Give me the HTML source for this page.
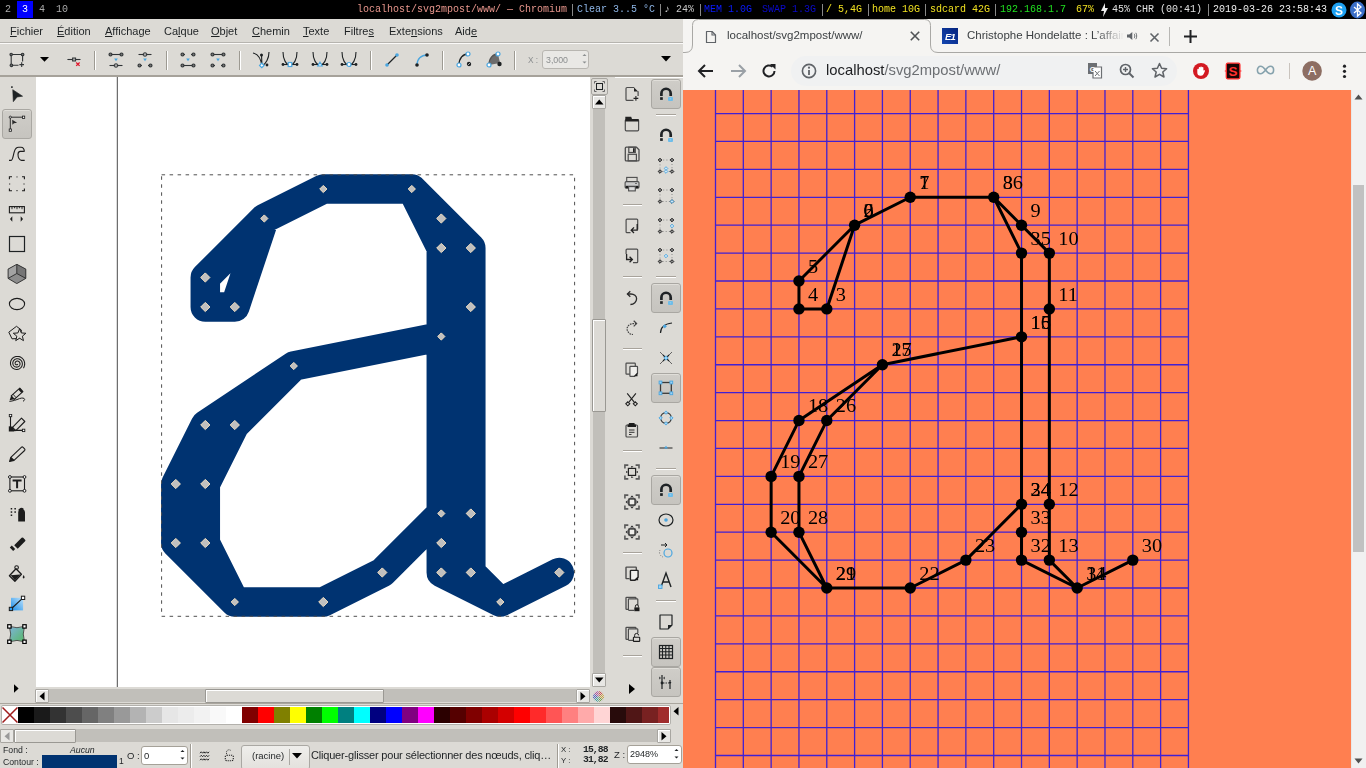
<!DOCTYPE html>
<html><head><meta charset="utf-8">
<style>
*{margin:0;padding:0;box-sizing:border-box}
html,body{width:1366px;height:768px;overflow:hidden;background:#000;font-family:"Liberation Sans",sans-serif;position:relative}
.a{position:absolute}
.t{white-space:pre;line-height:1.15;will-change:transform}
#bar{left:0;top:0;width:1366px;height:19px;background:#000;font-family:"Liberation Mono",monospace;font-size:10px}
#bar .t{line-height:19px}
#ink{left:0;top:0;width:683px;height:768px;overflow:hidden}
</style></head><body>
<div class="a" style="left:0;top:19px;width:683px;height:749px;background:#dcdad5"></div>
<div id="ink" class="a"><div class="a t" style="left:10px;top:26.19px;font-family:'Liberation Sans',sans-serif;font-size:11px;line-height:1;color:#1e2224;"><u>F</u>ichier</div><div class="a t" style="left:57px;top:26.19px;font-family:'Liberation Sans',sans-serif;font-size:11px;line-height:1;color:#1e2224;"><u>É</u>dition</div><div class="a t" style="left:105px;top:26.19px;font-family:'Liberation Sans',sans-serif;font-size:11px;line-height:1;color:#1e2224;"><u>A</u>ffichage</div><div class="a t" style="left:164px;top:26.19px;font-family:'Liberation Sans',sans-serif;font-size:11px;line-height:1;color:#1e2224;">Ca<u>l</u>que</div><div class="a t" style="left:211px;top:26.19px;font-family:'Liberation Sans',sans-serif;font-size:11px;line-height:1;color:#1e2224;"><u>O</u>bjet</div><div class="a t" style="left:252px;top:26.19px;font-family:'Liberation Sans',sans-serif;font-size:11px;line-height:1;color:#1e2224;"><u>C</u>hemin</div><div class="a t" style="left:303px;top:26.19px;font-family:'Liberation Sans',sans-serif;font-size:11px;line-height:1;color:#1e2224;"><u>T</u>exte</div><div class="a t" style="left:344px;top:26.19px;font-family:'Liberation Sans',sans-serif;font-size:11px;line-height:1;color:#1e2224;">Filtre<u>s</u></div><div class="a t" style="left:389px;top:26.19px;font-family:'Liberation Sans',sans-serif;font-size:11px;line-height:1;color:#1e2224;">Exte<u>n</u>sions</div><div class="a t" style="left:455px;top:26.19px;font-family:'Liberation Sans',sans-serif;font-size:11px;line-height:1;color:#1e2224;">Aid<u>e</u></div><div class="a" style="left:0px;top:42px;width:683px;height:1px;background:#b6b4af"></div><div class="a" style="left:0px;top:43px;width:683px;height:1px;background:#fbfaf9"></div><div class="a" style="left:0px;top:75px;width:683px;height:2px;background:#a6a29a"></div><div class="a" style="left:615px;top:77px;width:68px;height:1px;background:#fff"></div><div class="a" style="left:94px;top:51px;width:1px;height:19px;background:#9d9a92"></div><div class="a" style="left:95px;top:51px;width:1px;height:19px;background:#ffffff"></div><div class="a" style="left:166px;top:51px;width:1px;height:19px;background:#9d9a92"></div><div class="a" style="left:167px;top:51px;width:1px;height:19px;background:#ffffff"></div><div class="a" style="left:239px;top:51px;width:1px;height:19px;background:#9d9a92"></div><div class="a" style="left:240px;top:51px;width:1px;height:19px;background:#ffffff"></div><div class="a" style="left:370px;top:51px;width:1px;height:19px;background:#9d9a92"></div><div class="a" style="left:371px;top:51px;width:1px;height:19px;background:#ffffff"></div><div class="a" style="left:442px;top:51px;width:1px;height:19px;background:#9d9a92"></div><div class="a" style="left:443px;top:51px;width:1px;height:19px;background:#ffffff"></div><div class="a" style="left:514px;top:51px;width:1px;height:19px;background:#9d9a92"></div><div class="a" style="left:515px;top:51px;width:1px;height:19px;background:#ffffff"></div><svg class="a" style="left:9px;top:52px" width="16" height="16" viewBox="0 0 16 16" ><path d="M2.2 2.5H13.6V9.5M2.2 2.5V13.3H9.5" stroke="#303436" stroke-width="1.1" fill="none"/><circle cx="2.2" cy="2.5" r="1.2" fill="#777" stroke="#303436" stroke-width="1.1"/><circle cx="13.6" cy="2.5" r="1.3" fill="#777" stroke="#303436" stroke-width="1.1"/><circle cx="2.4" cy="13.3" r="1.3" fill="#777" stroke="#303436" stroke-width="1.1"/><path d="M12.7 10.3V14.9M10.4 12.6H15" stroke="#303436" stroke-width="1.1"/></svg><svg class="a" style="left:40px;top:57px" width="9" height="5" viewBox="0 0 9 5" ><path d="M0 0H9L4.5 4.8Z" fill="#000"/></svg><svg class="a" style="left:66px;top:55px" width="16" height="12" viewBox="0 0 16 12" ><path d="M1.4 4.5H14.5" stroke="#303436" stroke-width="1.1"/><rect x="6.6" y="3" width="3" height="3" fill="#aaa" stroke="#303436" stroke-width="1"/><path d="M10.2 7.5L13.6 10.9M13.6 7.5L10.2 10.9" stroke="#e0192d" stroke-width="1.3"/></svg><svg class="a" style="left:108px;top:52px" width="16" height="16" viewBox="0 0 16 16" ><path d="M2.5 2.5H13.5" stroke="#303436" stroke-width="1.1"/><circle cx="2.5" cy="2.5" r="1.5" fill="#777" stroke="#303436" stroke-width="1.1"/><circle cx="13.5" cy="2.5" r="1.5" fill="#777" stroke="#303436" stroke-width="1.1"/><path d="M6.2 6.6H9.8L8 9.2Z" fill="#4aa6e0"/><path d="M1.5 13.5H14.5" stroke="#303436" stroke-width="1.1"/><rect x="6.4" y="11.9" width="3.2" height="3.2" rx="0.6" fill="#aaa" stroke="#303436" stroke-width="1"/></svg><svg class="a" style="left:137px;top:52px" width="16" height="16" viewBox="0 0 16 16" ><path d="M1.5 2.5H14.5" stroke="#303436" stroke-width="1.1"/><rect x="6.4" y="0.8999999999999999" width="3.2" height="3.2" rx="0.6" fill="#aaa" stroke="#303436" stroke-width="1"/><path d="M6.2 6.6H9.8L8 9.2Z" fill="#4aa6e0"/><path d="M2.5 13.5H5M11 13.5H13.5" stroke="#303436" stroke-width="1.1"/><circle cx="2.5" cy="13.5" r="1.5" fill="#777" stroke="#303436" stroke-width="1.1"/><circle cx="13.5" cy="13.5" r="1.5" fill="#777" stroke="#303436" stroke-width="1.1"/></svg><svg class="a" style="left:180px;top:52px" width="16" height="16" viewBox="0 0 16 16" ><path d="M2.5 2.5H5M11 2.5H13.5" stroke="#303436" stroke-width="1.1"/><circle cx="2.5" cy="2.5" r="1.5" fill="#777" stroke="#303436" stroke-width="1.1"/><circle cx="13.5" cy="2.5" r="1.5" fill="#777" stroke="#303436" stroke-width="1.1"/><path d="M6.2 6.6H9.8L8 9.2Z" fill="#4aa6e0"/><path d="M2.5 13.5H13.5" stroke="#303436" stroke-width="1.1"/><circle cx="2.5" cy="13.5" r="1.5" fill="#777" stroke="#303436" stroke-width="1.1"/><circle cx="13.5" cy="13.5" r="1.5" fill="#777" stroke="#303436" stroke-width="1.1"/></svg><svg class="a" style="left:210px;top:52px" width="16" height="16" viewBox="0 0 16 16" ><path d="M2.5 2.5H13.5" stroke="#303436" stroke-width="1.1"/><circle cx="2.5" cy="2.5" r="1.5" fill="#777" stroke="#303436" stroke-width="1.1"/><circle cx="13.5" cy="2.5" r="1.5" fill="#777" stroke="#303436" stroke-width="1.1"/><path d="M6.2 6.6H9.8L8 9.2Z" fill="#4aa6e0"/><path d="M2.5 13.5H5M11 13.5H13.5" stroke="#303436" stroke-width="1.1"/><circle cx="2.5" cy="13.5" r="1.5" fill="#777" stroke="#303436" stroke-width="1.1"/><circle cx="13.5" cy="13.5" r="1.5" fill="#777" stroke="#303436" stroke-width="1.1"/></svg><svg class="a" style="left:252px;top:51px" width="18" height="18" viewBox="0 0 18 18" ><path d="M1 2C6 3 9 8 10 15M17 1C17 7 14 13 10 15M10 15L9.5 4" stroke="#1e2224" stroke-width="1.1" fill="none"/><circle cx="9.5" cy="4" r="1.5" fill="#1e2224"/><circle cx="15" cy="14" r="1.4" fill="#1e2224"/><rect x="8.2" y="12.8" width="3.2" height="3.2" transform="rotate(45 9.8 14.4)" fill="#fff" stroke="#4aa6e0" stroke-width="1.2"/></svg><svg class="a" style="left:281px;top:51px" width="18" height="18" viewBox="0 0 18 18" ><path d="M2 1C2 8 5 14 9 14C13 14 16 8 16 1" stroke="#1e2224" stroke-width="1.1" fill="none"/><path d="M2 13.5H16" stroke="#1e2224" stroke-width="1.1"/><circle cx="2" cy="13.5" r="1.4" fill="#1e2224"/><circle cx="16" cy="13.5" r="1.4" fill="#1e2224"/><rect x="7.2" y="11.5" width="3.6" height="4" fill="#fff" stroke="#4aa6e0" stroke-width="1.2"/></svg><svg class="a" style="left:311px;top:51px" width="18" height="18" viewBox="0 0 18 18" ><path d="M2 1C2 8 5 14 9 14C13 14 16 8 16 1" stroke="#1e2224" stroke-width="1.1" fill="none"/><path d="M2 13.5H16" stroke="#1e2224" stroke-width="1.1"/><circle cx="2" cy="13.5" r="1.4" fill="#1e2224"/><circle cx="16" cy="13.5" r="1.4" fill="#1e2224"/><path d="M9 11.2L11.2 15H6.8Z" fill="#fff" stroke="#4aa6e0" stroke-width="1.2"/></svg><svg class="a" style="left:340px;top:51px" width="18" height="18" viewBox="0 0 18 18" ><path d="M2 1C2 8 5 14 9 14C13 14 16 8 16 1" stroke="#1e2224" stroke-width="1.1" fill="none"/><path d="M2 13.5H16" stroke="#1e2224" stroke-width="1.1"/><circle cx="2" cy="13.5" r="1.4" fill="#1e2224"/><circle cx="16" cy="13.5" r="1.4" fill="#1e2224"/><circle cx="9" cy="13.5" r="2" fill="#fff" stroke="#4aa6e0" stroke-width="1.2"/></svg><svg class="a" style="left:384px;top:52px" width="16" height="16" viewBox="0 0 16 16" ><path d="M3 13L13 3" stroke="#1e2224" stroke-width="1.2"/><circle cx="3" cy="13" r="1.8" fill="#4aa6e0"/><circle cx="13" cy="3" r="1.8" fill="#4aa6e0"/></svg><svg class="a" style="left:414px;top:52px" width="16" height="16" viewBox="0 0 16 16" ><path d="M3 13C3 7 7 3 13 3" stroke="#4aa6e0" stroke-width="1.3" fill="none"/><circle cx="3" cy="13" r="1.8" fill="#1e2224"/><circle cx="13" cy="3" r="1.8" fill="#1e2224"/></svg><svg class="a" style="left:456px;top:51px" width="18" height="18" viewBox="0 0 18 18" ><path d="M3 14C3 7 7 3 12 3" stroke="#1e2224" stroke-width="1.4" fill="none"/><circle cx="3" cy="14" r="2" fill="#fff" stroke="#4aa6e0" stroke-width="1.2"/><circle cx="12" cy="3" r="2" fill="#fff" stroke="#4aa6e0" stroke-width="1.2"/><circle cx="13" cy="13" r="2.2" fill="#1e2224"/><path d="M11.5 14.5L14.5 11.5" stroke="#ccc" stroke-width="0.8"/></svg><svg class="a" style="left:486px;top:51px" width="18" height="18" viewBox="0 0 18 18" ><path d="M3 14C3 7 7 3 12 3L14 12Z" fill="#6c6c6c"/><path d="M3 14C3 7 7 3 12 3" stroke="#555" stroke-width="1.4" fill="none"/><circle cx="3" cy="14" r="2" fill="#fff" stroke="#4aa6e0" stroke-width="1.2"/><circle cx="12" cy="3" r="2" fill="#fff" stroke="#4aa6e0" stroke-width="1.2"/><circle cx="13.5" cy="13" r="2.2" fill="#1e2224"/></svg><div class="a t" style="left:528px;top:55.97px;font-family:'Liberation Sans',sans-serif;font-size:8.3px;line-height:1;color:#8b8e8f;">X :</div><div class="a" style="left:542px;top:50px;width:47px;height:19px;background:#e9e8e5;border:1px solid #b8b6b1;border-radius:3px"></div><div class="a t" style="left:546px;top:55.55px;font-family:'Liberation Sans',sans-serif;font-size:8.8px;line-height:1;color:#8b8e8f;">3,000</div><svg class="a" style="left:582px;top:53px" width="5" height="12" viewBox="0 0 5 12" ><path d="M0.5 3L2.5 1L4.5 3ZM0.5 8.5L2.5 10.5L4.5 8.5Z" fill="#8b8e8f"/></svg><svg class="a" style="left:661px;top:56px" width="10" height="6" viewBox="0 0 10 6" ><path d="M0 0H10L5 5.5Z" fill="#000"/></svg><div class="a" style="left:2px;top:109px;width:30px;height:30px;background:linear-gradient(#cfcdc8,#c6c4bf);border:1px solid #a9a7a2;border-radius:3px;box-shadow:inset 0 1px 0 #e0ded9"></div><svg class="a" style="left:7px;top:84px" width="20" height="20" viewBox="0 0 20 20" ><path d="M5.75 5.7L15.6 12.2L10.1 13L6.3 17.7Z" fill="#1e2224" stroke="#1e2224" stroke-width="0.6" stroke-linejoin="round"/><rect x="4.1" y="2.3" width="1.6" height="1.6" fill="#1e2224"/></svg><svg class="a" style="left:7px;top:114px" width="20" height="20" viewBox="0 0 20 20" ><path d="M3.3 3.2H16.5M3.3 3.2V16.1" stroke="#1c1c1c" stroke-width="0.9"/><circle cx="3.3" cy="3.2" r="1.1" fill="#ddd" stroke="#1c1c1c" stroke-width="0.8"/><rect x="15.4" y="2.1" width="2.3" height="2.3" fill="#eee" stroke="#1c1c1c" stroke-width="0.8"/><rect x="2.2" y="15" width="2.3" height="2.3" fill="#eee" stroke="#1c1c1c" stroke-width="0.8"/><path d="M5.2 5.7L10.1 8.7L7 9.3L5.4 10.7Z" fill="#2a2a2a"/></svg><svg class="a" style="left:7px;top:144px" width="20" height="20" viewBox="0 0 20 20" ><path d="M2 16.4H4.2C5.8 16.4 6 12 7.4 7.4C8.3 4.5 9.5 3.3 11.6 3.3H14C15.8 3.3 17.2 5 17.4 7.7M16.8 7.4H13.3C12 7.4 11 8.8 11 10.5C11 13.5 12.5 16.4 14.5 16.4H17.7" stroke="#1c1c1c" stroke-width="1.1" fill="none"/></svg><svg class="a" style="left:7px;top:174px" width="20" height="20" viewBox="0 0 20 20" ><path d="M2.4 5.2V2.8H5M15 2.8H17.4V5.2M17.4 14.4V16.8H15M5 16.8H2.4V14.4" stroke="#1c1c1c" stroke-width="1.1" fill="none"/><path d="M9 3.3L10 2.2L11 3.3ZM9 16.3L10 17.4L11 16.3ZM3.1 9L2 10L3.1 11ZM16.7 9L17.8 10L16.7 11Z" fill="#1c1c1c"/></svg><svg class="a" style="left:7px;top:204px" width="20" height="20" viewBox="0 0 20 20" ><rect x="2.4" y="2.6" width="15" height="6.2" fill="none" stroke="#1c1c1c" stroke-width="1.1"/><path d="M5 2.6V5.2M7.6 2.6V4.3M10 2.6V5.2M12.4 2.6V4.3M15 2.6V5.2" stroke="#1c1c1c" stroke-width="0.9"/><path d="M5.3 12.3V17.7L3 15Z M13.7 12.3V17.7L16 15Z" fill="#1c1c1c"/></svg><svg class="a" style="left:7px;top:234px" width="20" height="20" viewBox="0 0 20 20" ><rect x="2.5" y="2.5" width="15" height="15" fill="none" stroke="#1e2224" stroke-width="1.2"/></svg><svg class="a" style="left:7px;top:264px" width="20" height="20" viewBox="0 0 20 20" ><path d="M9.8 0.3L18.8 5.1V14.4L9.8 19.6L1.1 14.4V5.1Z" fill="#8c8c8c"/><path d="M9.8 0.3L1.1 5.1V14.4L9.8 9.5Z" fill="#a3a3a3"/><path d="M9.8 0.3L18.8 5.1V14.4L9.8 9.5Z" fill="#767676"/><path d="M9.8 0.3L18.8 5.1V14.4L9.8 19.6L1.1 14.4V5.1Z M9.8 0.3V9.5L1.1 14.4M9.8 9.5L18.8 14.4" fill="none" stroke="#2a2a2a" stroke-width="0.9" stroke-linejoin="round"/></svg><svg class="a" style="left:7px;top:294px" width="20" height="20" viewBox="0 0 20 20" ><ellipse cx="10" cy="10" rx="7.6" ry="5.6" fill="none" stroke="#1c1c1c" stroke-width="1.1"/></svg><svg class="a" style="left:7px;top:324px" width="20" height="20" viewBox="0 0 20 20" ><path d="M9.5 2.3L14.5 6.2L12.6 14.5L5 14.8L1.8 8.2Z" fill="#dcdad5" stroke="#1c1c1c" stroke-width="1"/><path d="M12.60 4.70 L14.30 8.95 L18.88 9.26 L15.36 12.20 L16.48 16.64 L12.60 14.20 L8.72 16.64 L9.84 12.20 L6.32 9.26 L10.90 8.95Z" fill="#dcdad5" stroke="#1c1c1c" stroke-width="1" stroke-linejoin="round"/></svg><svg class="a" style="left:7px;top:354px" width="20" height="20" viewBox="0 0 20 20" ><path d="M10.73 10.03 L10.70 10.12 L10.66 10.21 L10.62 10.30 L10.56 10.38 L10.49 10.46 L10.41 10.53 L10.32 10.60 L10.22 10.66 L10.11 10.71 L9.99 10.75 L9.87 10.78 L9.74 10.80 L9.61 10.80 L9.48 10.79 L9.34 10.77 L9.21 10.73 L9.07 10.68 L8.94 10.61 L8.81 10.53 L8.69 10.43 L8.58 10.32 L8.48 10.20 L8.39 10.06 L8.31 9.91 L8.24 9.76 L8.19 9.59 L8.15 9.42 L8.13 9.24 L8.13 9.06 L8.15 8.87 L8.19 8.68 L8.24 8.50 L8.31 8.32 L8.41 8.14 L8.52 7.97 L8.65 7.81 L8.79 7.66 L8.96 7.52 L9.14 7.40 L9.33 7.29 L9.53 7.20 L9.75 7.14 L9.97 7.09 L10.20 7.06 L10.44 7.06 L10.68 7.08 L10.92 7.12 L11.16 7.18 L11.39 7.27 L11.61 7.39 L11.83 7.52 L12.03 7.68 L12.23 7.86 L12.40 8.06 L12.56 8.28 L12.70 8.51 L12.81 8.77 L12.90 9.03 L12.97 9.30 L13.01 9.59 L13.02 9.87 L13.01 10.17 L12.97 10.46 L12.89 10.75 L12.79 11.03 L12.66 11.31 L12.51 11.58 L12.33 11.83 L12.12 12.07 L11.89 12.28 L11.63 12.48 L11.35 12.65 L11.06 12.80 L10.75 12.92 L10.43 13.01 L10.10 13.07 L9.76 13.10 L9.41 13.10 L9.06 13.06 L8.72 12.99 L8.38 12.88 L8.05 12.74 L7.73 12.57 L7.43 12.37 L7.14 12.14 L6.88 11.88 L6.64 11.59 L6.42 11.28 L6.24 10.94 L6.08 10.59 L5.96 10.22 L5.88 9.84 L5.83 9.45 L5.82 9.05 L5.84 8.65 L5.91 8.25 L6.01 7.85 L6.16 7.47 L6.34 7.09 L6.55 6.74 L6.80 6.40 L7.09 6.08 L7.41 5.80 L7.75 5.54 L8.12 5.31 L8.51 5.12 L8.93 4.96 L9.36 4.85 L9.80 4.77 L10.25 4.74 L10.70 4.75 L11.16 4.80 L11.61 4.90 L12.05 5.04 L12.48 5.22 L12.90 5.45 L13.29 5.71 L13.66 6.02 L14.00 6.36 L14.31 6.73 L14.58 7.13 L14.82 7.56 L15.01 8.02 L15.16 8.49 L15.27 8.98 L15.33 9.48 L15.34 9.99 L15.31 10.50 L15.22 11.01 L15.09 11.51 L14.91 12.00 L14.68 12.47 L14.41 12.92 L14.09 13.35 L13.73 13.74 L13.33 14.10 L12.90 14.43 L12.44 14.71 L11.94 14.95 L11.43 15.15 L10.89 15.29 L10.34 15.38 L9.78 15.43 L9.22 15.41 L8.66 15.35 L8.10 15.23 L7.55 15.06 L7.02 14.83 L6.51 14.55 L6.02 14.23 L5.57 13.85 L5.15 13.44 L4.77 12.98 L4.43 12.49 L4.14 11.96 L3.90 11.41 L3.72 10.83 L3.58 10.23 L3.51 9.62 L3.49 9.01 L3.53 8.39 L3.63 7.77 L3.79 7.16 L4.01 6.57 L4.28 6.00 L4.61 5.45 L4.99 4.94 L5.42 4.46 L5.90 4.02 L6.42 3.63 L6.97 3.28 L7.56 2.99 L8.18 2.76 L8.82 2.58 L9.48 2.46 L10.15 2.41 L10.82 2.42 L11.49 2.50 L12.16 2.63 L12.81 2.84 L13.45 3.10 L14.06 3.43 L14.63 3.81 L15.18 4.25 L15.68 4.74 L16.13 5.28 L16.53 5.86 L16.88 6.48 L17.17 7.13 L17.39 7.81 L17.55 8.52 L17.65 9.23 L17.68 9.96 L17.63 10.69 L17.52 11.42 L17.34 12.13 L17.09 12.83 L16.77 13.50 L16.39 14.14" fill="none" stroke="#1c1c1c" stroke-width="1.05"/></svg><svg class="a" style="left:7px;top:384px" width="20" height="20" viewBox="0 0 20 20" ><path d="M4.2 11.8L12.8 4.2L15.9 7.7L7.3 15.3Z" fill="none" stroke="#1c1c1c" stroke-width="1.1" stroke-linejoin="round"/><path d="M12.1 4.8L15.2 8.3" stroke="#1c1c1c" stroke-width="2.2"/><path d="M6 10.2L9.1 13.7" stroke="#1c1c1c" stroke-width="0.9"/><path d="M4.2 11.8L7.3 15.3L2.6 16.2Z" fill="#1c1c1c"/><path d="M2.4 17.4C6 17 9 16 12.5 14.6C15.5 13.4 18 14.3 17.6 15.6C17.4 16.5 16.6 17 16 17.3" fill="none" stroke="#1c1c1c" stroke-width="1"/></svg><svg class="a" style="left:7px;top:414px" width="20" height="20" viewBox="0 0 20 20" ><path d="M3.5 1.5V16.4H15.5" stroke="#1c1c1c" stroke-width="1.1" fill="none"/><rect x="2.3" y="0.3" width="2.4" height="2.4" fill="#fff" stroke="#1c1c1c" stroke-width="0.9"/><rect x="15.4" y="15.2" width="2.4" height="2.4" fill="#fff" stroke="#1c1c1c" stroke-width="0.9"/><path d="M1.8 12.3L6 12.8L7.5 17.4H1.8Z" fill="#1c1c1c"/><path d="M5.5 13.3L14.5 4.2L17.8 7.5L8.8 16.6Z" fill="none" stroke="#1c1c1c" stroke-width="1.1" stroke-linejoin="round"/></svg><svg class="a" style="left:7px;top:444px" width="20" height="20" viewBox="0 0 20 20" ><path d="M2.6 17.5L3.8 13.4L14.3 3.3Q15.2 2.5 16.1 3.3L17.6 4.8Q18.4 5.7 17.6 6.5L7 16.4Z" fill="none" stroke="#1c1c1c" stroke-width="1.1" stroke-linejoin="round"/><path d="M2.6 17.5L3.8 13.4L7 16.4Z" fill="#1c1c1c"/><path d="M3.8 13.4L7 16.4" stroke="#1c1c1c" stroke-width="1.4"/></svg><svg class="a" style="left:7px;top:474px" width="20" height="20" viewBox="0 0 20 20" ><rect x="2.9" y="3" width="14.6" height="13.8" fill="none" stroke="#1c1c1c" stroke-width="1.1"/><circle cx="2.9" cy="3" r="1.4" fill="#fff" stroke="#1c1c1c" stroke-width="1"/><circle cx="17.5" cy="3" r="1.4" fill="#fff" stroke="#1c1c1c" stroke-width="1"/><circle cx="2.9" cy="16.8" r="1.4" fill="#fff" stroke="#1c1c1c" stroke-width="1"/><circle cx="17.5" cy="16.8" r="1.4" fill="#fff" stroke="#1c1c1c" stroke-width="1"/><path d="M5.6 6.5H14.6M10.1 6.5V14.2" stroke="#1c1c1c" stroke-width="2"/></svg><svg class="a" style="left:7px;top:504px" width="20" height="20" viewBox="0 0 20 20" ><path d="M11.2 17.5V8.5Q11.2 6.5 12.5 5.5V4.5Q14.5 3 16.5 4.5V5.5Q18 6.5 18 8.5V17.5Z" fill="#1c1c1c"/><rect x="3.7" y="4" width="1.5" height="1.5" fill="#1c1c1c"/><rect x="7.4" y="4" width="1.5" height="1.5" fill="#1c1c1c"/><rect x="3.7" y="7.3" width="1.5" height="1.5" fill="#1c1c1c"/><rect x="7.4" y="7.3" width="1.5" height="1.5" fill="#1c1c1c"/><rect x="3.7" y="10.5" width="1.5" height="1.5" fill="#1c1c1c"/><rect x="11.6" y="5" width="1.5" height="1.5" fill="#1c1c1c"/></svg><svg class="a" style="left:7px;top:534px" width="20" height="20" viewBox="0 0 20 20" ><path d="M7.2 11.2L14.6 3.8Q15.4 3 16.2 3.8L18.1 5.7Q18.9 6.5 18.1 7.3L10.7 14.7Z" fill="#1c1c1c"/><path d="M2.8 13.6L4.8 11.6L8.2 15L6.2 17Z" fill="#1c1c1c"/></svg><svg class="a" style="left:7px;top:564px" width="20" height="20" viewBox="0 0 20 20" ><path d="M2.4 11.8L9 4.7L14.4 10.2L7.9 17.3Z" fill="none" stroke="#1c1c1c" stroke-width="1.3" stroke-linejoin="round"/><path d="M3.6 11.2L13.4 10.6L7.9 16.5Z" fill="#1c1c1c"/><circle cx="9.6" cy="3.6" r="1.8" fill="none" stroke="#1c1c1c" stroke-width="1.1"/><path d="M16.6 11C17.8 12.8 18 13.8 16.6 14.6C15.3 13.8 15.6 12.8 16.6 11Z" fill="#1c1c1c"/></svg><svg class="a" style="left:7px;top:594px" width="20" height="20" viewBox="0 0 20 20" ><defs><linearGradient id="gg1" x1="0" y1="1" x2="1" y2="0"><stop offset="0" stop-color="#1b8ee8"/><stop offset="1" stop-color="#bfe2fb"/></linearGradient></defs><rect x="4" y="3.8" width="12.1" height="12.6" fill="url(#gg1)"/><path d="M4 15L16 3.8" stroke="#1c1c1c" stroke-width="1.1"/><rect x="2.3" y="13.3" width="3.3" height="3.3" fill="#2d9cf0" stroke="#1c1c1c" stroke-width="1"/><rect x="14.4" y="2.2" width="3.3" height="3.3" fill="#fff" stroke="#1c1c1c" stroke-width="1"/></svg><svg class="a" style="left:7px;top:624px" width="20" height="20" viewBox="0 0 20 20" ><defs><linearGradient id="gg2" x1="0" y1="0" x2="1" y2="1"><stop offset="0" stop-color="#7fb3dc"/><stop offset="1" stop-color="#57b865"/></linearGradient></defs><path d="M2.4 2.4Q10 5 17.5 2.4Q15 10 17.5 17.8Q10 15 2.4 17.8Q5 10 2.4 2.4Z" fill="url(#gg2)" stroke="#333" stroke-width="0.8"/><rect x="0.7" y="0.7" width="3.4" height="3.4" fill="#fff" stroke="#000" stroke-width="1.2"/><rect x="15.8" y="0.7" width="3.4" height="3.4" fill="#fff" stroke="#000" stroke-width="1.2"/><rect x="0.7" y="16.1" width="3.4" height="3.4" fill="#fff" stroke="#000" stroke-width="1.2"/><rect x="15.8" y="16.1" width="3.4" height="3.4" fill="#fff" stroke="#000" stroke-width="1.2"/></svg><svg class="a" style="left:14px;top:684px" width="5" height="9" viewBox="0 0 5 9" ><path d="M0 0.3L4.6 4.5L0 8.7Z" fill="#000"/></svg><div class="a" style="left:36px;top:77px;width:554px;height:610px;overflow:hidden"><svg class="a" style="left:0;top:0" width="554" height="610" viewBox="0 0 554 610">
<rect width="554" height="610" fill="#fff"/>
<path d="M81.30 0V610" stroke="#4a4a4a" stroke-width="1"/>
<path d="M228.30 141.50 L198.80 230.00 L169.30 230.00 L169.30 200.50 L228.30 141.50 L287.30 112.00 L375.80 112.00 L405.30 141.50 L434.80 171.00 L434.80 230.00 L434.80 436.50 L434.80 495.50 L464.30 525.00 L523.30 495.50M464.30 525.00 L405.30 495.50 L405.30 466.00 L405.30 436.50 L405.30 171.00 L375.80 112.00M405.30 259.50 L257.80 289.00 L169.30 348.00 L139.80 407.00 L139.80 466.00 L198.80 525.00 L287.30 525.00 L346.30 495.50 L405.30 436.50M257.80 289.00 L198.80 348.00 L169.30 407.00 L169.30 466.00 L198.80 525.00" stroke="#003371" stroke-width="29.5" fill="none" stroke-linejoin="round" stroke-linecap="round"/>
<rect x="125.6" y="97.8" width="413.0" height="441.5" fill="none" stroke="#505050" stroke-width="1" stroke-dasharray="3.5 4.5"/>
<path d="M139.80 402.40L144.40 407.00L139.80 411.60L135.20 407.00Z" fill="#c0c0c0" stroke="#f5e0c0" stroke-width="1"/>
<path d="M139.80 461.40L144.40 466.00L139.80 470.60L135.20 466.00Z" fill="#c0c0c0" stroke="#f5e0c0" stroke-width="1"/>
<path d="M169.30 195.90L173.90 200.50L169.30 205.10L164.70 200.50Z" fill="#c0c0c0" stroke="#f5e0c0" stroke-width="1"/>
<path d="M169.30 225.40L173.90 230.00L169.30 234.60L164.70 230.00Z" fill="#c0c0c0" stroke="#f5e0c0" stroke-width="1"/>
<path d="M169.30 343.40L173.90 348.00L169.30 352.60L164.70 348.00Z" fill="#c0c0c0" stroke="#f5e0c0" stroke-width="1"/>
<path d="M169.30 402.40L173.90 407.00L169.30 411.60L164.70 407.00Z" fill="#c0c0c0" stroke="#f5e0c0" stroke-width="1"/>
<path d="M169.30 461.40L173.90 466.00L169.30 470.60L164.70 466.00Z" fill="#c0c0c0" stroke="#f5e0c0" stroke-width="1"/>
<path d="M198.80 225.40L203.40 230.00L198.80 234.60L194.20 230.00Z" fill="#c0c0c0" stroke="#f5e0c0" stroke-width="1"/>
<path d="M198.80 343.40L203.40 348.00L198.80 352.60L194.20 348.00Z" fill="#c0c0c0" stroke="#f5e0c0" stroke-width="1"/>
<path d="M198.80 521.40L202.40 525.00L198.80 528.60L195.20 525.00Z" fill="#c0c0c0" stroke="#f5e0c0" stroke-width="1"/>
<path d="M228.30 137.90L231.90 141.50L228.30 145.10L224.70 141.50Z" fill="#c0c0c0" stroke="#f5e0c0" stroke-width="1"/>
<path d="M257.80 285.40L261.40 289.00L257.80 292.60L254.20 289.00Z" fill="#c0c0c0" stroke="#f5e0c0" stroke-width="1"/>
<path d="M287.30 108.40L290.90 112.00L287.30 115.60L283.70 112.00Z" fill="#c0c0c0" stroke="#f5e0c0" stroke-width="1"/>
<path d="M287.30 520.40L291.90 525.00L287.30 529.60L282.70 525.00Z" fill="#c0c0c0" stroke="#f5e0c0" stroke-width="1"/>
<path d="M346.30 490.90L350.90 495.50L346.30 500.10L341.70 495.50Z" fill="#c0c0c0" stroke="#f5e0c0" stroke-width="1"/>
<path d="M375.80 108.40L379.40 112.00L375.80 115.60L372.20 112.00Z" fill="#c0c0c0" stroke="#f5e0c0" stroke-width="1"/>
<path d="M405.30 136.90L409.90 141.50L405.30 146.10L400.70 141.50Z" fill="#c0c0c0" stroke="#f5e0c0" stroke-width="1"/>
<path d="M405.30 166.40L409.90 171.00L405.30 175.60L400.70 171.00Z" fill="#c0c0c0" stroke="#f5e0c0" stroke-width="1"/>
<path d="M405.30 255.90L408.90 259.50L405.30 263.10L401.70 259.50Z" fill="#c0c0c0" stroke="#f5e0c0" stroke-width="1"/>
<path d="M405.30 432.90L408.90 436.50L405.30 440.10L401.70 436.50Z" fill="#c0c0c0" stroke="#f5e0c0" stroke-width="1"/>
<path d="M405.30 461.40L409.90 466.00L405.30 470.60L400.70 466.00Z" fill="#c0c0c0" stroke="#f5e0c0" stroke-width="1"/>
<path d="M405.30 490.90L409.90 495.50L405.30 500.10L400.70 495.50Z" fill="#c0c0c0" stroke="#f5e0c0" stroke-width="1"/>
<path d="M434.80 166.40L439.40 171.00L434.80 175.60L430.20 171.00Z" fill="#c0c0c0" stroke="#f5e0c0" stroke-width="1"/>
<path d="M434.80 225.40L439.40 230.00L434.80 234.60L430.20 230.00Z" fill="#c0c0c0" stroke="#f5e0c0" stroke-width="1"/>
<path d="M434.80 431.90L439.40 436.50L434.80 441.10L430.20 436.50Z" fill="#c0c0c0" stroke="#f5e0c0" stroke-width="1"/>
<path d="M434.80 490.90L439.40 495.50L434.80 500.10L430.20 495.50Z" fill="#c0c0c0" stroke="#f5e0c0" stroke-width="1"/>
<path d="M464.30 521.40L467.90 525.00L464.30 528.60L460.70 525.00Z" fill="#c0c0c0" stroke="#f5e0c0" stroke-width="1"/>
<path d="M523.30 490.90L527.90 495.50L523.30 500.10L518.70 495.50Z" fill="#c0c0c0" stroke="#f5e0c0" stroke-width="1"/>
</svg></div><div class="a" style="left:590px;top:78px;width:18px;height:611px;background:#dcdad5"></div><div class="a" style="left:593px;top:95px;width:12px;height:580px;background:#c1bfba"></div><div class="a" style="left:591px;top:78px;width:17px;height:17px;background:#dcdad5;border:1px solid #a8a6a1;border-radius:2px"></div><svg class="a" style="left:594px;top:81px" width="11" height="11" viewBox="0 0 11 11" ><rect x="2.5" y="2.5" width="6" height="6" fill="none" stroke="#1e2224" stroke-width="1"/><path d="M0.5 2.5V0.5H2.5M8.5 0.5H10.5V2.5M10.5 8.5V10.5H8.5M2.5 10.5H0.5V8.5" stroke="#555" stroke-width="0.9" fill="none"/></svg><div class="a" style="left:592px;top:95px;width:14px;height:14px;background:#e8e7e4;border:1px solid #a8a6a1;border-radius:1px;box-shadow:inset 1px 1px 0 #fff"></div><svg class="a" style="left:595px;top:99px" width="9" height="6" viewBox="0 0 9 6" ><path d="M0 5.5H8.5L4.25 0.5Z" fill="#000"/></svg><div class="a" style="left:592px;top:319px;width:14px;height:93px;background:#dcdad5;border:1px solid #9a9893;border-radius:1px;box-shadow:inset 1px 1px 0 #fff"></div><div class="a" style="left:592px;top:673px;width:14px;height:14px;background:#e8e7e4;border:1px solid #a8a6a1;border-radius:1px;box-shadow:inset 1px 1px 0 #fff"></div><svg class="a" style="left:595px;top:677px" width="9" height="6" viewBox="0 0 9 6" ><path d="M0 0.5H8.5L4.25 5.5Z" fill="#000"/></svg><div class="a" style="left:36px;top:687px;width:556px;height:16px;background:#dcdad5"></div><div class="a" style="left:48px;top:689px;width:528px;height:13px;background:#c1bfba"></div><div class="a" style="left:35px;top:689px;width:14px;height:14px;background:#e8e7e4;border:1px solid #a8a6a1;border-radius:1px;box-shadow:inset 1px 1px 0 #fff"></div><svg class="a" style="left:39px;top:692px" width="6" height="9" viewBox="0 0 6 9" ><path d="M5.5 0V8.5L0.5 4.25Z" fill="#000"/></svg><div class="a" style="left:205px;top:689px;width:179px;height:14px;background:#dcdad5;border:1px solid #9a9893;border-radius:1px;box-shadow:inset 1px 1px 0 #fff"></div><div class="a" style="left:576px;top:689px;width:14px;height:14px;background:#e8e7e4;border:1px solid #a8a6a1;border-radius:1px;box-shadow:inset 1px 1px 0 #fff"></div><svg class="a" style="left:580px;top:692px" width="6" height="9" viewBox="0 0 6 9" ><path d="M0.5 0V8.5L5.5 4.25Z" fill="#000"/></svg><svg class="a" style="left:592px;top:690px" width="13" height="13" viewBox="0 0 13 13" ><path d="M6.5 6.5L6.50 1.00A5.5 5.5 0 0 1 11.26 3.75Z" fill="#d05050"/><path d="M6.5 6.5L11.26 3.75A5.5 5.5 0 0 1 11.26 9.25Z" fill="#c8a040"/><path d="M6.5 6.5L11.26 9.25A5.5 5.5 0 0 1 6.50 12.00Z" fill="#70a050"/><path d="M6.5 6.5L6.50 12.00A5.5 5.5 0 0 1 1.74 9.25Z" fill="#40a0a0"/><path d="M6.5 6.5L1.74 9.25A5.5 5.5 0 0 1 1.74 3.75Z" fill="#5060c0"/><path d="M6.5 6.5L1.74 3.75A5.5 5.5 0 0 1 6.50 1.00Z" fill="#b050a0"/><path d="M-13 0L0 13M0 0L-13 13M-11 0L2 13M2 0L-11 13M-9 0L4 13M4 0L-9 13M-7 0L6 13M6 0L-7 13M-5 0L8 13M8 0L-5 13M-3 0L10 13M10 0L-3 13M-1 0L12 13M12 0L-1 13M1 0L14 13M14 0L1 13M3 0L16 13M16 0L3 13M5 0L18 13M18 0L5 13M7 0L20 13M20 0L7 13M9 0L22 13M22 0L9 13M11 0L24 13M24 0L11 13" stroke="#dcdad5" stroke-width="0.8"/></svg><svg class="a" style="left:622px;top:84px" width="20" height="20" viewBox="0 0 20 20" ><path d="M12.2 3.5H5Q4 3.5 4 4.5V15.4Q4 16.4 5 16.4H11.5M16.1 7.3V12" fill="none" stroke="#4d4d4d" stroke-width="1.2"/><path d="M12 3.5L16.1 7.6H12Z" fill="#222"/><path d="M13.9 12V16.8M11.5 14.4H16.3" stroke="#222" stroke-width="1.1"/></svg><svg class="a" style="left:622px;top:114px" width="20" height="20" viewBox="0 0 20 20" ><rect x="3.3" y="5.6" width="13.3" height="11.2" rx="1" fill="none" stroke="#4d4d4d" stroke-width="1.2"/><path d="M3.3 2.8H9.2L10 5.1H16.6V7.4H3.3Z" fill="#222"/></svg><svg class="a" style="left:622px;top:144px" width="20" height="20" viewBox="0 0 20 20" ><path d="M4.3 3.2H14.5L17 5.7V15.9Q17 16.9 16 16.9H4.3Q3.3 16.9 3.3 15.9V4.2Q3.3 3.2 4.3 3.2Z" fill="none" stroke="#4d4d4d" stroke-width="1.3"/><rect x="6.8" y="3.2" width="6.5" height="5.3" fill="none" stroke="#4d4d4d" stroke-width="1.2"/><rect x="11" y="4.2" width="1.7" height="3.8" fill="#222"/><rect x="6.2" y="10.3" width="8.2" height="6.6" fill="none" stroke="#4d4d4d" stroke-width="1.2"/></svg><svg class="a" style="left:622px;top:174px" width="20" height="20" viewBox="0 0 20 20" ><rect x="4.7" y="3.4" width="10.4" height="4.3" fill="none" stroke="#4d4d4d" stroke-width="1.1"/><rect x="3.1" y="7.6" width="13.9" height="6.7" rx="1.2" fill="#ccc" stroke="#4d4d4d" stroke-width="1.1"/><rect x="3.6" y="11.8" width="12.9" height="2.3" fill="#1c1c1c"/><rect x="6.6" y="12.6" width="6.7" height="4.3" fill="#ddd" stroke="#4d4d4d" stroke-width="1.1"/><path d="M13 9.5H15" stroke="#555" stroke-width="0.8"/></svg><div class="a" style="left:623px;top:204px;width:19px;height:1px;background:#a8a39b"></div><div class="a" style="left:623px;top:205px;width:19px;height:1px;background:#fff"></div><svg class="a" style="left:622px;top:216px" width="20" height="20" viewBox="0 0 20 20" ><path d="M8.5 16.6H5Q4.1 16.6 4.1 15.7V4Q4.1 3.1 5 3.1H14.8Q15.7 3.1 15.7 4V13.5" fill="none" stroke="#4d4d4d" stroke-width="1.2"/><path d="M15.2 8V14.2H9.4M12 11.4L9.2 14.2L12 17" fill="none" stroke="#222" stroke-width="1.3"/></svg><svg class="a" style="left:622px;top:246px" width="20" height="20" viewBox="0 0 20 20" ><path d="M4.1 8V4Q4.1 3.1 5 3.1H14.8Q15.7 3.1 15.7 4V15.7Q15.7 16.6 14.8 16.6H11" fill="none" stroke="#4d4d4d" stroke-width="1.2"/><path d="M4.6 8V13.5H10.2M7.6 10.7L10.4 13.5L7.6 16.3" fill="none" stroke="#222" stroke-width="1.3"/></svg><div class="a" style="left:623px;top:276px;width:19px;height:1px;background:#a8a39b"></div><div class="a" style="left:623px;top:277px;width:19px;height:1px;background:#fff"></div><svg class="a" style="left:622px;top:288px" width="20" height="20" viewBox="0 0 20 20" ><path d="M5.5 6H9C12 6 14.6 8 14.6 10.8C14.6 13.6 12 16.5 8.4 16.5" fill="none" stroke="#2a2a2a" stroke-width="1.3"/><path d="M8.3 3.2L5.4 6L8.3 8.8" fill="none" stroke="#2a2a2a" stroke-width="1.3"/></svg><svg class="a" style="left:622px;top:318px" width="20" height="20" viewBox="0 0 20 20" ><path d="M14.5 5.6H11C8 5.6 5.1 8 5.1 10.8C5.1 13.6 7.5 16.5 11 16.5" fill="none" stroke="#444" stroke-width="1.2" stroke-dasharray="1.6 0.9"/><path d="M11.7 2.8L14.6 5.6L11.7 8.4" fill="none" stroke="#444" stroke-width="1.2"/></svg><div class="a" style="left:623px;top:348px;width:19px;height:1px;background:#a8a39b"></div><div class="a" style="left:623px;top:349px;width:19px;height:1px;background:#fff"></div><svg class="a" style="left:622px;top:360px" width="20" height="20" viewBox="0 0 20 20" ><path d="M7.9 14.1H4.6Q4 14.1 4 13.5V3.7Q4 3.1 4.6 3.1H12.7Q13.3 3.1 13.3 3.7V6.4" fill="none" stroke="#4d4d4d" stroke-width="1.2"/><path d="M8.5 6.4H14.9Q15.5 6.4 15.5 7V13.3L12.5 16.3H8.5Q7.9 16.3 7.9 15.7V7Q7.9 6.4 8.5 6.4Z" fill="#f0efec" stroke="#4d4d4d" stroke-width="1.2"/><path d="M15.5 12.6V16.3H11.8Z" fill="#1c1c1c"/></svg><svg class="a" style="left:622px;top:390px" width="20" height="20" viewBox="0 0 20 20" ><path d="M5.2 3.3L12.2 12.2M13.9 3.3L6.9 12.2" stroke="#222" stroke-width="1.1"/><path d="M5.8 11.8L7.8 13.8L5.8 15.8L3.8 13.8Z M13.3 11.8L15.3 13.8L13.3 15.8L11.3 13.8Z" fill="none" stroke="#222" stroke-width="1.1"/></svg><svg class="a" style="left:622px;top:420px" width="20" height="20" viewBox="0 0 20 20" ><rect x="4" y="5" width="11.5" height="12" rx="1" fill="none" stroke="#4d4d4d" stroke-width="1.2"/><path d="M6.8 4.5V3.6Q6.8 3 7.4 3H12.1Q12.7 3 12.7 3.6V4.5H14V7H5.5V4.5Z" fill="#1c1c1c"/><path d="M7 10H12.5M7 12.3H12.5M7 14.5H9.5" stroke="#333" stroke-width="1"/></svg><div class="a" style="left:623px;top:450px;width:19px;height:1px;background:#a8a39b"></div><div class="a" style="left:623px;top:451px;width:19px;height:1px;background:#fff"></div><svg class="a" style="left:622px;top:462px" width="20" height="20" viewBox="0 0 20 20" ><path d="M2.9 6.5V3.1H6.3M13.6 3.1H17V6.5M17 13.5V16.9H13.6M6.3 16.9H2.9V13.5" fill="none" stroke="#5a5a5a" stroke-width="1.6"/><rect x="6.4" y="6.4" width="7.2" height="7" fill="none" stroke="#222" stroke-width="1.2"/><path d="M9.2 4.6H10.8L10 5.4ZM9.2 15.4H10.8L10 14.6ZM4.6 9.2V10.8L5.4 10ZM15.4 9.2V10.8L14.6 10Z" fill="#222" stroke="#222" stroke-width="0.6"/></svg><svg class="a" style="left:622px;top:492px" width="20" height="20" viewBox="0 0 20 20" ><path d="M2.9 6.5V3.1H6.3M13.6 3.1H17V6.5M17 13.5V16.9H13.6M6.3 16.9H2.9V13.5" fill="none" stroke="#5a5a5a" stroke-width="1.6"/><path d="M10 3.4L16.4 10L10 16.6L3.6 10Z" fill="#8a8a8a"/><rect x="7" y="7" width="6" height="6" fill="#f0efec" stroke="#222" stroke-width="1.2"/><path d="M10 3.4L11.2 5H8.8ZM10 16.6L11.2 15H8.8ZM3.6 10L5.2 8.8V11.2ZM16.4 10L14.8 8.8V11.2Z" fill="#222"/></svg><svg class="a" style="left:622px;top:522px" width="20" height="20" viewBox="0 0 20 20" ><path d="M2.9 6.5V3.1H6.3M13.6 3.1H17V6.5M17 13.5V16.9H13.6M6.3 16.9H2.9V13.5" fill="none" stroke="#5a5a5a" stroke-width="1.6"/><path d="M10 3.4L16.4 10L10 16.6L3.6 10Z" fill="#8a8a8a"/><rect x="7" y="7" width="6" height="6" fill="#f0efec" stroke="#222" stroke-width="1.2"/><path d="M10 3.4L11.2 5H8.8ZM10 16.6L11.2 15H8.8ZM3.6 10L5.2 8.8V11.2ZM16.4 10L14.8 8.8V11.2Z" fill="#222"/></svg><div class="a" style="left:623px;top:552px;width:19px;height:1px;background:#a8a39b"></div><div class="a" style="left:623px;top:553px;width:19px;height:1px;background:#fff"></div><svg class="a" style="left:622px;top:564px" width="20" height="20" viewBox="0 0 20 20" ><path d="M7.5 14.6H4.6Q4 14.6 4 14V3.7Q4 3.1 4.6 3.1H13.7Q14.3 3.1 14.3 3.7V6.4" fill="none" stroke="#4d4d4d" stroke-width="1.4"/><path d="M9 6.4H15.5Q16.1 6.4 16.1 7V13.3L12.9 16.3H9Q8.4 16.3 8.4 15.7V7Q8.4 6.4 9 6.4Z" fill="#f0efec" stroke="#222" stroke-width="1.4"/><path d="M16.1 12.6V16.3H12.2Z" fill="#1c1c1c"/></svg><svg class="a" style="left:622px;top:594px" width="20" height="20" viewBox="0 0 20 20" ><path d="M6.5 15.4H4.6Q4 15.4 4 14.8V3.9Q4 3.3 4.6 3.3H13.3Q13.9 3.3 13.9 3.9V5" fill="none" stroke="#4d4d4d" stroke-width="1.3"/><path d="M12 16.4H7.2Q6.4 16.4 6.4 15.6V5.6Q6.4 4.8 7.2 4.8H15Q15.8 4.8 15.8 5.6V11" fill="none" stroke="#4d4d4d" stroke-width="1.2"/><rect x="12.3" y="13.4" width="5.2" height="3.8" fill="#1c1c1c"/><path d="M13.4 13.5V12.2A1.5 1.5 0 0 1 16.4 12.2V13.5" fill="none" stroke="#1c1c1c" stroke-width="1"/></svg><svg class="a" style="left:622px;top:624px" width="20" height="20" viewBox="0 0 20 20" ><path d="M6.5 15.4H4.6Q4 15.4 4 14.8V3.9Q4 3.3 4.6 3.3H13.3Q13.9 3.3 13.9 3.9V5" fill="none" stroke="#4d4d4d" stroke-width="1.3"/><path d="M12 16.4H7.2Q6.4 16.4 6.4 15.6V5.6Q6.4 4.8 7.2 4.8H15Q15.8 4.8 15.8 5.6V9" fill="none" stroke="#4d4d4d" stroke-width="1.2"/><rect x="11.4" y="13.2" width="6.3" height="4.2" rx="0.5" fill="none" stroke="#1c1c1c" stroke-width="1.1"/><path d="M12.6 13V11.4A2 2 0 0 1 16.6 11.4" fill="none" stroke="#1c1c1c" stroke-width="1"/></svg><div class="a" style="left:623px;top:655px;width:19px;height:1px;background:#a8a39b"></div><div class="a" style="left:623px;top:656px;width:19px;height:1px;background:#fff"></div><svg class="a" style="left:629px;top:684px" width="6" height="10" viewBox="0 0 6 10" ><path d="M0 0L6 5L0 10Z" fill="#000"/></svg><div class="a" style="left:651px;top:79px;width:30px;height:30px;background:linear-gradient(#cfcdc8,#c6c4bf);border:1px solid #a9a7a2;border-radius:3px;box-shadow:inset 0 1px 0 #e0ded9"></div><svg class="a" style="left:656px;top:84px" width="20" height="20" viewBox="0 0 20 20" ><path d="M5.4 12V9.4A4.65 4.65 0 0 1 14.7 9.4V12" fill="none" stroke="#1f2326" stroke-width="2.7"/><rect x="4.1" y="13.2" width="2.7" height="2.7" fill="#1f2326"/><rect x="12" y="13" width="5" height="4" rx="1" fill="#6ebde9"/><path d="M13.6 14.5H15.4L14.5 15.5Z" fill="#a9daf5"/></svg><div class="a" style="left:656px;top:114px;width:20px;height:1px;background:#a8a39b"></div><div class="a" style="left:656px;top:115px;width:20px;height:1px;background:#fff"></div><svg class="a" style="left:656px;top:125px" width="20" height="20" viewBox="0 0 20 20" ><path d="M5.4 12V9.4A4.65 4.65 0 0 1 14.7 9.4V12" fill="none" stroke="#1f2326" stroke-width="2.7"/><rect x="4.1" y="13.2" width="2.7" height="2.7" fill="#1f2326"/><rect x="12" y="13" width="5" height="4" rx="1" fill="#6ebde9"/><path d="M13.6 14.5H15.4L14.5 15.5Z" fill="#a9daf5"/></svg><svg class="a" style="left:656px;top:156px" width="20" height="20" viewBox="0 0 20 20" ><path d="M4 4H16V15.5H4Z" fill="none" stroke="#777" stroke-width="0.8" stroke-dasharray="1 2.2"/><path d="M4 2.2L5.8 4L4 5.8L2.2 4Z" fill="#888" stroke="#222" stroke-width="1"/><path d="M16 2.2L17.8 4L16 5.8L14.2 4Z" fill="#888" stroke="#222" stroke-width="1"/><path d="M4 13.7L5.8 15.5L4 17.3L2.2 15.5Z" fill="#888" stroke="#222" stroke-width="1"/><path d="M16 13.7L17.8 15.5L16 17.3L14.2 15.5Z" fill="#888" stroke="#222" stroke-width="1"/><path d="M10 10.7L11.8 12.5L10 14.3L8.2 12.5Z" fill="#cfe6f5" stroke="#4aa6e0" stroke-width="0.9"/><path d="M10 13.7L11.8 15.5L10 17.3L8.2 15.5Z" fill="#cfe6f5" stroke="#4aa6e0" stroke-width="0.9"/></svg><svg class="a" style="left:656px;top:186px" width="20" height="20" viewBox="0 0 20 20" ><path d="M4 4H16V15.5H4Z" fill="none" stroke="#777" stroke-width="0.8" stroke-dasharray="1 2.2"/><path d="M4 2.2L5.8 4L4 5.8L2.2 4Z" fill="#888" stroke="#222" stroke-width="1"/><path d="M16 2.2L17.8 4L16 5.8L14.2 4Z" fill="#888" stroke="#222" stroke-width="1"/><path d="M4 13.7L5.8 15.5L4 17.3L2.2 15.5Z" fill="#888" stroke="#222" stroke-width="1"/><path d="M16 13.7L17.8 15.5L16 17.3L14.2 15.5Z" fill="#888" stroke="#222" stroke-width="1"/><path d="M16 13.7L17.8 15.5L16 17.3L14.2 15.5Z" fill="#cfe6f5" stroke="#4aa6e0" stroke-width="0.9"/></svg><svg class="a" style="left:656px;top:216px" width="20" height="20" viewBox="0 0 20 20" ><path d="M4 4H16V15.5H4Z" fill="none" stroke="#777" stroke-width="0.8" stroke-dasharray="1 2.2"/><path d="M4 2.2L5.8 4L4 5.8L2.2 4Z" fill="#888" stroke="#222" stroke-width="1"/><path d="M16 2.2L17.8 4L16 5.8L14.2 4Z" fill="#888" stroke="#222" stroke-width="1"/><path d="M4 13.7L5.8 15.5L4 17.3L2.2 15.5Z" fill="#888" stroke="#222" stroke-width="1"/><path d="M16 13.7L17.8 15.5L16 17.3L14.2 15.5Z" fill="#888" stroke="#222" stroke-width="1"/><path d="M16 8.2L17.8 10L16 11.8L14.2 10Z" fill="#cfe6f5" stroke="#4aa6e0" stroke-width="0.9"/></svg><svg class="a" style="left:656px;top:246px" width="20" height="20" viewBox="0 0 20 20" ><path d="M4 4H16V15.5H4Z" fill="none" stroke="#777" stroke-width="0.8" stroke-dasharray="1 2.2"/><path d="M4 2.2L5.8 4L4 5.8L2.2 4Z" fill="#888" stroke="#222" stroke-width="1"/><path d="M16 2.2L17.8 4L16 5.8L14.2 4Z" fill="#888" stroke="#222" stroke-width="1"/><path d="M4 13.7L5.8 15.5L4 17.3L2.2 15.5Z" fill="#888" stroke="#222" stroke-width="1"/><path d="M16 13.7L17.8 15.5L16 17.3L14.2 15.5Z" fill="#888" stroke="#222" stroke-width="1"/><path d="M10 8.2L11.8 10L10 11.8L8.2 10Z" fill="#cfe6f5" stroke="#4aa6e0" stroke-width="0.9"/></svg><div class="a" style="left:656px;top:276px;width:20px;height:1px;background:#a8a39b"></div><div class="a" style="left:656px;top:277px;width:20px;height:1px;background:#fff"></div><div class="a" style="left:651px;top:283px;width:30px;height:30px;background:linear-gradient(#cfcdc8,#c6c4bf);border:1px solid #a9a7a2;border-radius:3px;box-shadow:inset 0 1px 0 #e0ded9"></div><svg class="a" style="left:656px;top:288px" width="20" height="20" viewBox="0 0 20 20" ><path d="M5.4 12V9.4A4.65 4.65 0 0 1 14.7 9.4V12" fill="none" stroke="#1f2326" stroke-width="2.7"/><rect x="4.1" y="13.2" width="2.7" height="2.7" fill="#1f2326"/><rect x="12" y="13" width="5" height="4" rx="1" fill="#6ebde9"/><path d="M13.6 14.5H15.4L14.5 15.5Z" fill="#a9daf5"/></svg><svg class="a" style="left:656px;top:318px" width="20" height="20" viewBox="0 0 20 20" ><path d="M4.5 15C4.5 10 8 6 16 5" fill="none" stroke="#1e2224" stroke-width="1.2"/><circle cx="8.7" cy="8.3" r="1.5" fill="#4aa6e0"/><path d="M6.8 8.3H10.6M8.7 6.4V10.2" stroke="#4aa6e0" stroke-width="0.8"/></svg><svg class="a" style="left:656px;top:348px" width="20" height="20" viewBox="0 0 20 20" ><path d="M4 4L16 16M16 4L4 16" stroke="#555" stroke-width="0.9"/><path d="M7 7L13 13M13 7L7 13" stroke="#1e2224" stroke-width="1.1"/><path d="M10 7.8L12.2 10L10 12.2L7.8 10Z" fill="#9dd3f5" stroke="#4aa6e0" stroke-width="0.9"/></svg><div class="a" style="left:651px;top:373px;width:30px;height:30px;background:linear-gradient(#cfcdc8,#c6c4bf);border:1px solid #a9a7a2;border-radius:3px;box-shadow:inset 0 1px 0 #e0ded9"></div><svg class="a" style="left:656px;top:378px" width="20" height="20" viewBox="0 0 20 20" ><rect x="4.5" y="4.5" width="10.8" height="10.8" fill="none" stroke="#3a3a3a" stroke-width="1.3"/><rect x="3.1" y="3.1" width="2.8" height="2.8" fill="#9dd3f5" stroke="#4aa6e0" stroke-width="0.9"/><rect x="13.9" y="3.1" width="2.8" height="2.8" fill="#9dd3f5" stroke="#4aa6e0" stroke-width="0.9"/><rect x="3.1" y="13.9" width="2.8" height="2.8" fill="#9dd3f5" stroke="#4aa6e0" stroke-width="0.9"/><rect x="13.9" y="13.9" width="2.8" height="2.8" fill="#9dd3f5" stroke="#4aa6e0" stroke-width="0.9"/></svg><svg class="a" style="left:656px;top:408px" width="20" height="20" viewBox="0 0 20 20" ><circle cx="10" cy="10" r="5.4" fill="none" stroke="#333" stroke-width="1.1"/><path d="M10 2.8999999999999995L11.7 4.6L10 6.3L8.3 4.6Z" fill="#9dd3f5" stroke="#4aa6e0" stroke-width="0.9"/><path d="M15.4 8.3L17.1 10L15.4 11.7L13.700000000000001 10Z" fill="#9dd3f5" stroke="#4aa6e0" stroke-width="0.9"/><path d="M10 13.700000000000001L11.7 15.4L10 17.1L8.3 15.4Z" fill="#9dd3f5" stroke="#4aa6e0" stroke-width="0.9"/><path d="M4.6 8.3L6.3 10L4.6 11.7L2.8999999999999995 10Z" fill="#9dd3f5" stroke="#4aa6e0" stroke-width="0.9"/></svg><svg class="a" style="left:656px;top:438px" width="20" height="20" viewBox="0 0 20 20" ><path d="M3.5 10H16.5" stroke="#333" stroke-width="1.1"/><path d="M10 7.8L12 10.5H8Z" fill="#4aa6e0"/></svg><div class="a" style="left:656px;top:468px;width:20px;height:1px;background:#a8a39b"></div><div class="a" style="left:656px;top:469px;width:20px;height:1px;background:#fff"></div><div class="a" style="left:651px;top:475px;width:30px;height:30px;background:linear-gradient(#cfcdc8,#c6c4bf);border:1px solid #a9a7a2;border-radius:3px;box-shadow:inset 0 1px 0 #e0ded9"></div><svg class="a" style="left:656px;top:480px" width="20" height="20" viewBox="0 0 20 20" ><path d="M5.4 12V9.4A4.65 4.65 0 0 1 14.7 9.4V12" fill="none" stroke="#1f2326" stroke-width="2.7"/><rect x="4.1" y="13.2" width="2.7" height="2.7" fill="#1f2326"/><rect x="12" y="13" width="5" height="4" rx="1" fill="#6ebde9"/><path d="M13.6 14.5H15.4L14.5 15.5Z" fill="#a9daf5"/></svg><svg class="a" style="left:656px;top:510px" width="20" height="20" viewBox="0 0 20 20" ><ellipse cx="10" cy="10" rx="7" ry="6" fill="none" stroke="#1e2224" stroke-width="1.2"/><circle cx="10" cy="10" r="1.8" fill="#4aa6e0"/></svg><svg class="a" style="left:656px;top:540px" width="20" height="20" viewBox="0 0 20 20" ><circle cx="12" cy="13" r="4" fill="none" stroke="#4aa6e0" stroke-width="1.2"/><path d="M4 10A5 5 0 0 0 7 17" stroke="#777" stroke-width="1" stroke-dasharray="1 1.5" fill="none"/><path d="M5 5H11M9 3L11 5L9 7" stroke="#1e2224" stroke-width="1" fill="none"/></svg><svg class="a" style="left:656px;top:570px" width="20" height="20" viewBox="0 0 20 20" ><path d="M5 17L10 3L15 17M7 12H13" fill="none" stroke="#1e2224" stroke-width="1.4"/><rect x="2.5" y="15" width="3.5" height="3.5" fill="#9dd3f5" stroke="#4aa6e0" stroke-width="0.9"/></svg><div class="a" style="left:656px;top:600px;width:20px;height:1px;background:#a8a39b"></div><div class="a" style="left:656px;top:601px;width:20px;height:1px;background:#fff"></div><svg class="a" style="left:656px;top:612px" width="20" height="20" viewBox="0 0 20 20" ><path d="M4 3H16V13L12 17H4Z" fill="none" stroke="#1e2224" stroke-width="1.2" stroke-linejoin="round"/><path d="M16 13H12V17Z" fill="#1e2224"/></svg><div class="a" style="left:651px;top:637px;width:30px;height:30px;background:linear-gradient(#cfcdc8,#c6c4bf);border:1px solid #a9a7a2;border-radius:3px;box-shadow:inset 0 1px 0 #e0ded9"></div><svg class="a" style="left:656px;top:642px" width="20" height="20" viewBox="0 0 20 20" ><rect x="3.5" y="3.5" width="13" height="13" fill="none" stroke="#1e2224" stroke-width="1.2"/><path d="M6.5 3.5V16.5M9.75 3.5V16.5M13 3.5V16.5M3.5 6.5H16.5M3.5 9.75H16.5M3.5 13H16.5" stroke="#1e2224" stroke-width="1.1"/></svg><div class="a" style="left:651px;top:667px;width:30px;height:30px;background:linear-gradient(#cfcdc8,#c6c4bf);border:1px solid #a9a7a2;border-radius:3px;box-shadow:inset 0 1px 0 #e0ded9"></div><svg class="a" style="left:656px;top:672px" width="20" height="20" viewBox="0 0 20 20" ><path d="M6 3V17M14 8V17" stroke="#1e2224" stroke-width="1.2"/><path d="M7 11H13" stroke="#1e2224" stroke-width="0.9" stroke-dasharray="1.5 1"/><circle cx="6" cy="11" r="1.4" fill="#1e2224"/><path d="M12.5 10H15.5L14 12Z" fill="#1e2224"/><path d="M3 5L4.5 6L3 7M9 5L7.5 6L9 7" fill="none" stroke="#1e2224" stroke-width="0.8"/></svg><div class="a" style="left:0px;top:703px;width:683px;height:1px;background:#aaa69e"></div><div class="a" style="left:1px;top:705px;width:670px;height:20px;background:#fff;border:1px solid #b3b1ac;border-radius:2px"></div><div class="a" style="left:18.2px;top:707px;width:16px;height:16px;background:#000000"></div><div class="a" style="left:34.2px;top:707px;width:16px;height:16px;background:#1a1a1a"></div><div class="a" style="left:50.2px;top:707px;width:16px;height:16px;background:#333333"></div><div class="a" style="left:66.2px;top:707px;width:16px;height:16px;background:#4d4d4d"></div><div class="a" style="left:82.2px;top:707px;width:16px;height:16px;background:#666666"></div><div class="a" style="left:98.2px;top:707px;width:16px;height:16px;background:#808080"></div><div class="a" style="left:114.2px;top:707px;width:16px;height:16px;background:#999999"></div><div class="a" style="left:130.2px;top:707px;width:16px;height:16px;background:#b3b3b3"></div><div class="a" style="left:146.2px;top:707px;width:16px;height:16px;background:#cccccc"></div><div class="a" style="left:162.2px;top:707px;width:16px;height:16px;background:#e6e6e6"></div><div class="a" style="left:178.2px;top:707px;width:16px;height:16px;background:#ececec"></div><div class="a" style="left:194.2px;top:707px;width:16px;height:16px;background:#f2f2f2"></div><div class="a" style="left:210.2px;top:707px;width:16px;height:16px;background:#f9f9f9"></div><div class="a" style="left:226.2px;top:707px;width:16px;height:16px;background:#ffffff"></div><div class="a" style="left:242.2px;top:707px;width:16px;height:16px;background:#800000"></div><div class="a" style="left:258.2px;top:707px;width:16px;height:16px;background:#ff0000"></div><div class="a" style="left:274.2px;top:707px;width:16px;height:16px;background:#808000"></div><div class="a" style="left:290.2px;top:707px;width:16px;height:16px;background:#ffff00"></div><div class="a" style="left:306.2px;top:707px;width:16px;height:16px;background:#008000"></div><div class="a" style="left:322.2px;top:707px;width:16px;height:16px;background:#00ff00"></div><div class="a" style="left:338.2px;top:707px;width:16px;height:16px;background:#008080"></div><div class="a" style="left:354.2px;top:707px;width:16px;height:16px;background:#00ffff"></div><div class="a" style="left:370.2px;top:707px;width:16px;height:16px;background:#000080"></div><div class="a" style="left:386.2px;top:707px;width:16px;height:16px;background:#0000ff"></div><div class="a" style="left:402.2px;top:707px;width:16px;height:16px;background:#800080"></div><div class="a" style="left:418.2px;top:707px;width:16px;height:16px;background:#ff00ff"></div><div class="a" style="left:434.2px;top:707px;width:16px;height:16px;background:#2b0000"></div><div class="a" style="left:450.2px;top:707px;width:16px;height:16px;background:#550000"></div><div class="a" style="left:466.2px;top:707px;width:16px;height:16px;background:#800000"></div><div class="a" style="left:482.2px;top:707px;width:16px;height:16px;background:#aa0000"></div><div class="a" style="left:498.2px;top:707px;width:16px;height:16px;background:#d40000"></div><div class="a" style="left:514.2px;top:707px;width:16px;height:16px;background:#ff0000"></div><div class="a" style="left:530.2px;top:707px;width:16px;height:16px;background:#ff2a2a"></div><div class="a" style="left:546.2px;top:707px;width:16px;height:16px;background:#ff5555"></div><div class="a" style="left:562.2px;top:707px;width:16px;height:16px;background:#ff8080"></div><div class="a" style="left:578.2px;top:707px;width:16px;height:16px;background:#ffaaaa"></div><div class="a" style="left:594.2px;top:707px;width:16px;height:16px;background:#ffd5d5"></div><div class="a" style="left:610.2px;top:707px;width:16px;height:16px;background:#280b0b"></div><div class="a" style="left:626.2px;top:707px;width:16px;height:16px;background:#501616"></div><div class="a" style="left:642.2px;top:707px;width:16px;height:16px;background:#782121"></div><div class="a" style="left:658.2px;top:707px;width:11.0px;height:16px;background:#a02c2c"></div><svg class="a" style="left:2px;top:707px" width="16" height="16" viewBox="0 0 16 16" ><rect width="16" height="16" fill="#fff"/><path d="M0.5 0.5L15.5 15.5M15.5 0.5L0.5 15.5" stroke="#a01c1c" stroke-width="1.5"/></svg><svg class="a" style="left:673px;top:707px" width="6" height="9" viewBox="0 0 6 9" ><path d="M5.5 0V8.5L0.5 4.25Z" fill="#000"/></svg><div class="a" style="left:0px;top:729px;width:671px;height:13px;background:#c1bfba"></div><div class="a" style="left:0px;top:729px;width:14px;height:14px;background:#e8e7e4;border:1px solid #a8a6a1;border-radius:1px"></div><svg class="a" style="left:4px;top:732px" width="6" height="9" viewBox="0 0 6 9" ><path d="M5.5 0V8.5L0.5 4.25Z" fill="#9a9a9a"/></svg><div class="a" style="left:14px;top:729px;width:62px;height:14px;background:#dcdad5;border:1px solid #9a9893;border-radius:1px;box-shadow:inset 1px 1px 0 #fff"></div><div class="a" style="left:657px;top:729px;width:14px;height:14px;background:#e8e7e4;border:1px solid #a8a6a1;border-radius:1px;box-shadow:inset 1px 1px 0 #fff"></div><svg class="a" style="left:661px;top:732px" width="6" height="9" viewBox="0 0 6 9" ><path d="M0.5 0V8.5L5.5 4.25Z" fill="#000"/></svg><div class="a t" style="left:2.6px;top:745.54px;font-family:'Liberation Sans',sans-serif;font-size:8.7px;line-height:1;color:#1e2224;">Fond :</div><div class="a t" style="left:70.3px;top:745.54px;font-family:'Liberation Sans',sans-serif;font-size:8.7px;line-height:1;color:#1e2224;"><i>Aucun</i></div><div class="a t" style="left:2.6px;top:757.54px;font-family:'Liberation Sans',sans-serif;font-size:8.7px;line-height:1;color:#1e2224;">Contour :</div><div class="a" style="left:42px;top:755px;width:75px;height:13px;background:#003371"></div><div class="a t" style="left:118.5px;top:757.40px;font-family:'Liberation Sans',sans-serif;font-size:8.5px;line-height:1;color:#1e2224;">1</div><div class="a t" style="left:127px;top:750.96px;font-family:'Liberation Sans',sans-serif;font-size:9.5px;line-height:1;color:#1e2224;">O :</div><div class="a" style="left:141px;top:746px;width:47px;height:19px;background:#fff;border:1px solid #a5a198;border-radius:3px"></div><div class="a t" style="left:144px;top:750.66px;font-family:'Liberation Sans',sans-serif;font-size:9.5px;line-height:1;color:#1e2224;">0</div><svg class="a" style="left:180px;top:749px" width="5" height="12" viewBox="0 0 5 12" ><path d="M0.5 3L2.5 1L4.5 3ZM0.5 8.5L2.5 10.5L4.5 8.5Z" fill="#1e2224"/></svg><div class="a" style="left:190px;top:744px;width:1px;height:24px;background:#a09c94"></div><div class="a" style="left:191px;top:744px;width:1px;height:24px;background:#fff"></div><svg class="a" style="left:199px;top:748px" width="12" height="14" viewBox="0 0 12 14" ><path d="M1 5.2L2.3 3.8L3.6 5.2L4.9 3.8L6.2 5.2L7.5 3.8L8.8 5.2L10.1 3.8M1 8.7L2.3 7.3L3.6 8.7L4.9 7.3L6.2 8.7L7.5 7.3L8.8 8.7L10.1 7.3M1 12.2L2.3 10.8L3.6 12.2L4.9 10.8L6.2 12.2L7.5 10.8L8.8 12.2L10.1 10.8" stroke="#222" stroke-width="1" fill="none"/></svg><svg class="a" style="left:223px;top:747px" width="12" height="15" viewBox="0 0 12 15" ><path d="M3.5 7V5A2.5 2.5 0 0 1 8 3.8" fill="none" stroke="#333" stroke-width="0.9" stroke-dasharray="1.2 0.8"/><rect x="2.3" y="8.2" width="8" height="5.5" rx="1.5" fill="none" stroke="#222" stroke-width="1.1" stroke-dasharray="1.2 0.9"/></svg><div class="a" style="left:241px;top:745px;width:69px;height:25px;background:linear-gradient(#efeeeb,#e3e1dd);border:1px solid #aaa8a3;border-radius:3px"></div><div class="a t" style="left:252px;top:750.96px;font-family:'Liberation Sans',sans-serif;font-size:9.5px;line-height:1;color:#1e2224;">(racine)</div><div class="a" style="left:289px;top:749px;width:1px;height:16px;background:#aaa8a3"></div><svg class="a" style="left:292px;top:753px" width="10" height="6" viewBox="0 0 10 6" ><path d="M0 0H10L5 5.5Z" fill="#000"/></svg><div class="a t" style="left:311.4px;top:750.09px;font-family:'Liberation Sans',sans-serif;font-size:11px;line-height:1;color:#1e2224;letter-spacing:-0.19px">Cliquer-glisser pour sélectionner des nœuds, cliq…</div><div class="a" style="left:557px;top:744px;width:1px;height:24px;background:#a09c94"></div><div class="a" style="left:558px;top:744px;width:1px;height:24px;background:#fff"></div><div class="a t" style="left:561px;top:746.20px;font-family:'Liberation Sans',sans-serif;font-size:7.8px;line-height:1;color:#1e2224;">X :</div><div class="a t" style="left:561px;top:757.40px;font-family:'Liberation Sans',sans-serif;font-size:7.8px;line-height:1;color:#1e2224;">Y :</div><div class="a t" style="left:582.5px;top:744.56px;font-family:'Liberation Mono',monospace;font-size:9.7px;line-height:1;color:#1e2224;font-weight:bold;letter-spacing:-0.9px">15,88</div><div class="a t" style="left:582.5px;top:755.06px;font-family:'Liberation Mono',monospace;font-size:9.7px;line-height:1;color:#1e2224;font-weight:bold;letter-spacing:-0.9px">31,82</div><div class="a t" style="left:614px;top:749.86px;font-family:'Liberation Sans',sans-serif;font-size:9.5px;line-height:1;color:#1e2224;">Z :</div><div class="a" style="left:627px;top:745px;width:55px;height:19px;background:#fff;border:1px solid #a5a198;border-radius:3px"></div><div class="a t" style="left:630px;top:750.28px;font-family:'Liberation Sans',sans-serif;font-size:9px;line-height:1;color:#1e2224;">2948%</div><svg class="a" style="left:674px;top:748px" width="5" height="12" viewBox="0 0 5 12" ><path d="M0.5 3L2.5 1L4.5 3ZM0.5 8.5L2.5 10.5L4.5 8.5Z" fill="#1e2224"/></svg></div>
<div class="a" style="left:683px;top:19px;width:683px;height:71px;background:#f5f4f2"></div><svg class="a" style="left:683px;top:19px" width="683" height="35" viewBox="0 0 683 35" ><path d="M-2 33.5H2Q9.5 33.5 9.5 26V6.5Q9.5 0.5 15.5 0.5H241.5Q247.5 0.5 247.5 6.5V26Q247.5 33.5 255 33.5H700" fill="none" stroke="#a9a8a5" stroke-width="1"/></svg><svg class="a" style="left:704px;top:30px" width="14" height="14" viewBox="0 0 14 14" ><path d="M2.5 1.5H8L11.5 5V12.5H2.5Z" fill="none" stroke="#5f6368" stroke-width="1.2" stroke-linejoin="round"/><path d="M8 1.5V5H11.5" fill="none" stroke="#5f6368" stroke-width="1.1"/></svg><div class="a t" style="left:727.3px;top:29.97px;font-family:'Liberation Sans',sans-serif;font-size:11.5px;line-height:1;color:#3c4043;">localhost/svg2mpost/www/</div><svg class="a" style="left:909px;top:30px" width="12" height="12" viewBox="0 0 12 12" ><path d="M1.8 1.8L10.2 10.2M10.2 1.8L1.8 10.2" stroke="#505356" stroke-width="1.6"/></svg><div class="a" style="left:942px;top:28px;width:16px;height:16px;background:linear-gradient(45deg,#1446b0,#04237e)"></div><div class="a t" style="left:944.5px;top:31.96px;font-family:'Liberation Sans',sans-serif;font-size:9.5px;line-height:1;color:#fff;letter-spacing:-0.8px"><b><i>E1</i></b></div><div class="a t" style="left:966.5px;top:30.27px;font-family:'Liberation Sans',sans-serif;font-size:11.5px;line-height:1;color:#3c4043;width:157px;overflow:hidden;white-space:nowrap;-webkit-mask-image:linear-gradient(90deg,#000 82%,transparent)">Christophe Hondelatte : L’affair</div><svg class="a" style="left:1126px;top:31px" width="12" height="10" viewBox="0 0 12 10" ><path d="M1 3.5H3.3L6.3 1V9L3.3 6.5H1Z" fill="#5f6368"/><path d="M8.2 2.8C9 4 9 6 8.2 7.2M9.8 1.8C11 3.5 11 6.5 9.8 8.2" stroke="#5f6368" stroke-width="0.9" fill="none"/></svg><svg class="a" style="left:1149px;top:32px" width="12" height="12" viewBox="0 0 12 12" ><path d="M1.5 1.5L9.5 9.5M9.5 1.5L1.5 9.5" stroke="#5f6368" stroke-width="1.6"/></svg><div class="a" style="left:1169px;top:27px;width:1px;height:19px;background:#b8b7b4"></div><svg class="a" style="left:1183px;top:29px" width="15" height="15" viewBox="0 0 15 15" ><path d="M7.5 1V14M1 7.5H14" stroke="#202124" stroke-width="2"/></svg><svg class="a" style="left:697px;top:63px" width="18" height="16" viewBox="0 0 18 16" ><path d="M16 8H2M8 2L2 8L8 14" fill="none" stroke="#202124" stroke-width="2"/></svg><svg class="a" style="left:729px;top:63px" width="18" height="16" viewBox="0 0 18 16" ><path d="M2 8H16M10 2L16 8L10 14" fill="none" stroke="#9aa0a6" stroke-width="2"/></svg><svg class="a" style="left:761px;top:63px" width="16" height="16" viewBox="0 0 16 16" ><path d="M13.5 8A5.5 5.5 0 1 1 11.6 3.8" fill="none" stroke="#202124" stroke-width="2"/><path d="M9 1H14.5V6.5Z" fill="#202124"/></svg><div class="a" style="left:791px;top:56px;width:386px;height:30px;background:#f0f1f2;border-radius:15px"></div><svg class="a" style="left:801px;top:63px" width="16" height="16" viewBox="0 0 16 16" ><circle cx="8" cy="8" r="6.6" fill="none" stroke="#5f6368" stroke-width="1.6"/><path d="M8 7V12" stroke="#5f6368" stroke-width="1.8"/><circle cx="8" cy="4.7" r="1.1" fill="#5f6368"/></svg><div class="a t" style="left:825.7px;top:63.37px;font-family:'Liberation Sans',sans-serif;font-size:14.8px;line-height:1;color:#202124;"><span style="color:#202124">localhost</span><span style="color:#6c6f73">/svg2mpost/www/</span></div><svg class="a" style="left:1087px;top:62px" width="17" height="18" viewBox="0 0 17 18" ><rect x="1" y="1" width="9" height="11" fill="#6c6f73"/><path d="M6 5H14.5V16H6Z" fill="#fff" stroke="#6c6f73" stroke-width="1.2"/><text x="5.5" y="10" font-family="Liberation Sans" font-size="7" font-weight="bold" fill="#fff" text-anchor="middle">G</text><path d="M8 9L12.5 14M12.5 9L8 14" stroke="#6c6f73" stroke-width="1"/></svg><svg class="a" style="left:1119px;top:63px" width="16" height="16" viewBox="0 0 16 16" ><circle cx="6.5" cy="6.5" r="5" fill="none" stroke="#5f6368" stroke-width="1.7"/><path d="M10 10L14.5 14.5" stroke="#5f6368" stroke-width="2"/><path d="M6.5 4V9M4 6.5H9" stroke="#5f6368" stroke-width="1.4"/></svg><svg class="a" style="left:1151px;top:62px" width="17" height="17" viewBox="0 0 17 17" ><path d="M8.5 1.5L10.6 6.3L15.6 6.7L11.8 10L13 15L8.5 12.3L4 15L5.2 10L1.4 6.7L6.4 6.3Z" fill="none" stroke="#5f6368" stroke-width="1.5" stroke-linejoin="round"/></svg><svg class="a" style="left:1192px;top:62px" width="18" height="18" viewBox="0 0 18 18" ><circle cx="9" cy="9" r="8" fill="#d31a22"/><path d="M5.3 9.8V7.6Q5.3 6.8 6.1 6.8Q6.8 6.8 6.8 7.6V5.8Q6.8 5 7.6 5Q8.3 5 8.3 5.8V5.2Q8.3 4.4 9.1 4.4Q9.9 4.4 9.9 5.2V5.8Q9.9 5 10.7 5Q11.4 5 11.4 5.8V8.7Q11.9 7.9 12.6 8.2Q13.2 8.6 12.8 9.4L11.5 12.2Q10.6 13.7 8.6 13.7Q5.3 13.7 5.3 10.5Z" fill="#fff"/></svg><svg class="a" style="left:1224px;top:62px" width="18" height="18" viewBox="0 0 18 18" ><rect x="2.3" y="1.2" width="13.6" height="15.6" rx="1.5" fill="#1a0505" stroke="#ff2a2a" stroke-width="1.3"/><path d="M0.8 9H2.3M15.9 9H17.4" stroke="#ff2a2a" stroke-width="1.2"/><text x="9.1" y="14.3" font-family="Liberation Sans" font-weight="bold" font-size="13.5" fill="#ff3030" text-anchor="middle">S</text></svg><svg class="a" style="left:1256px;top:64px" width="19" height="12" viewBox="0 0 19 12" ><path d="M9.5 6C7.5 3.3 6.2 2.3 4.6 2.3C2.7 2.3 1.4 4 1.4 6C1.4 8 2.7 9.7 4.6 9.7C6.2 9.7 7.5 8.7 9.5 6C11.5 3.3 12.8 2.3 14.4 2.3C16.3 2.3 17.6 4 17.6 6C17.6 8 16.3 9.7 14.4 9.7C12.8 9.7 11.5 8.7 9.5 6Z" fill="none" stroke="#86a2ad" stroke-width="1.6"/></svg><div class="a" style="left:1289px;top:63px;width:1px;height:16px;background:#c9c3bd"></div><svg class="a" style="left:1302px;top:61px" width="20" height="20" viewBox="0 0 20 20" ><circle cx="10.1" cy="9.9" r="9.8" fill="#8d6e63"/><text x="10.1" y="14.3" font-family="Liberation Sans" font-size="12.5" fill="#fff" text-anchor="middle">A</text></svg><svg class="a" style="left:1342px;top:63px" width="5" height="16" viewBox="0 0 5 16" ><circle cx="2.5" cy="3.2" r="1.6" fill="#202124"/><circle cx="2.5" cy="8.3" r="1.6" fill="#202124"/><circle cx="2.5" cy="13.5" r="1.6" fill="#202124"/></svg><div class="a" style="left:683px;top:90px;width:668px;height:678px;overflow:hidden;will-change:transform"><svg class="a" style="left:0;top:0" width="668" height="678" viewBox="0 0 668 678">
<rect width="668" height="678" fill="#ff7f50"/>
<path d="M32.50 0V678M60.32 0V678M88.14 0V678M115.96 0V678M143.78 0V678M171.60 0V678M199.42 0V678M227.24 0V678M255.06 0V678M282.88 0V678M310.70 0V678M338.52 0V678M366.34 0V678M394.16 0V678M421.98 0V678M449.80 0V678M477.62 0V678M505.44 0V678M32.50 23.55H505.44M32.50 51.46H505.44M32.50 79.37H505.44M32.50 107.28H505.44M32.50 135.19H505.44M32.50 163.10H505.44M32.50 191.01H505.44M32.50 218.92H505.44M32.50 246.83H505.44M32.50 274.74H505.44M32.50 302.65H505.44M32.50 330.56H505.44M32.50 358.47H505.44M32.50 386.38H505.44M32.50 414.29H505.44M32.50 442.20H505.44M32.50 470.11H505.44M32.50 498.02H505.44M32.50 525.93H505.44M32.50 553.84H505.44M32.50 581.75H505.44M32.50 609.66H505.44M32.50 637.57H505.44M32.50 665.48H505.44" stroke="#4020d4" stroke-width="1.3" fill="none"/>
<path d="M171.60 135.19 L143.78 218.92 L115.96 218.92 L115.96 191.01 L171.60 135.19 L227.24 107.28 L310.70 107.28 L338.52 135.19 L366.34 163.10 L366.34 218.92 L366.34 414.29 L366.34 470.11 L394.16 498.02 L449.80 470.11M394.16 498.02 L338.52 470.11 L338.52 442.20 L338.52 414.29 L338.52 163.10 L310.70 107.28M338.52 246.83 L199.42 274.74 L115.96 330.56 L88.14 386.38 L88.14 442.20 L143.78 498.02 L227.24 498.02 L282.88 470.11 L338.52 414.29M199.42 274.74 L143.78 330.56 L115.96 386.38 L115.96 442.20 L143.78 498.02" stroke="#000" stroke-width="3" fill="none" stroke-linejoin="round"/>
<circle cx="88.14" cy="386.38" r="5.7"/>
<circle cx="88.14" cy="442.20" r="5.7"/>
<circle cx="115.96" cy="191.01" r="5.7"/>
<circle cx="115.96" cy="218.92" r="5.7"/>
<circle cx="115.96" cy="330.56" r="5.7"/>
<circle cx="115.96" cy="386.38" r="5.7"/>
<circle cx="115.96" cy="442.20" r="5.7"/>
<circle cx="143.78" cy="218.92" r="5.7"/>
<circle cx="143.78" cy="330.56" r="5.7"/>
<circle cx="143.78" cy="498.02" r="5.7"/>
<circle cx="171.60" cy="135.19" r="5.7"/>
<circle cx="199.42" cy="274.74" r="5.7"/>
<circle cx="227.24" cy="107.28" r="5.7"/>
<circle cx="227.24" cy="498.02" r="5.7"/>
<circle cx="282.88" cy="470.11" r="5.7"/>
<circle cx="310.70" cy="107.28" r="5.7"/>
<circle cx="338.52" cy="135.19" r="5.7"/>
<circle cx="338.52" cy="163.10" r="5.7"/>
<circle cx="338.52" cy="246.83" r="5.7"/>
<circle cx="338.52" cy="414.29" r="5.7"/>
<circle cx="338.52" cy="442.20" r="5.7"/>
<circle cx="338.52" cy="470.11" r="5.7"/>
<circle cx="366.34" cy="163.10" r="5.7"/>
<circle cx="366.34" cy="218.92" r="5.7"/>
<circle cx="366.34" cy="414.29" r="5.7"/>
<circle cx="366.34" cy="470.11" r="5.7"/>
<circle cx="394.16" cy="498.02" r="5.7"/>
<circle cx="449.80" cy="470.11" r="5.7"/>
<g font-family="Liberation Serif" font-size="18px">
<text transform="translate(180.60 126.89) scale(1.13 1)">0</text>
<text transform="translate(180.60 126.89) scale(1.13 1)">2</text>
<text transform="translate(180.60 126.89) scale(1.13 1)">6</text>
<text transform="translate(236.24 98.98) scale(1.13 1)">1</text>
<text transform="translate(236.24 98.98) scale(1.13 1)">7</text>
<text transform="translate(319.70 98.98) scale(1.13 1)">8</text>
<text transform="translate(319.70 98.98) scale(1.13 1)">36</text>
<text transform="translate(347.52 126.89) scale(1.13 1)">9</text>
<text transform="translate(375.34 154.80) scale(1.13 1)">10</text>
<text transform="translate(347.52 154.80) scale(1.13 1)">35</text>
<text transform="translate(375.34 210.62) scale(1.13 1)">11</text>
<text transform="translate(152.78 210.62) scale(1.13 1)">3</text>
<text transform="translate(124.96 210.62) scale(1.13 1)">4</text>
<text transform="translate(124.96 182.71) scale(1.13 1)">5</text>
<text transform="translate(347.52 238.53) scale(1.13 1)">15</text>
<text transform="translate(347.52 238.53) scale(1.13 1)">16</text>
<text transform="translate(208.42 266.44) scale(1.13 1)">17</text>
<text transform="translate(208.42 266.44) scale(1.13 1)">25</text>
<text transform="translate(124.96 322.26) scale(1.13 1)">18</text>
<text transform="translate(152.78 322.26) scale(1.13 1)">26</text>
<text transform="translate(97.14 378.08) scale(1.13 1)">19</text>
<text transform="translate(124.96 378.08) scale(1.13 1)">27</text>
<text transform="translate(97.14 433.90) scale(1.13 1)">20</text>
<text transform="translate(124.96 433.90) scale(1.13 1)">28</text>
<text transform="translate(152.78 489.72) scale(1.13 1)">21</text>
<text transform="translate(152.78 489.72) scale(1.13 1)">29</text>
<text transform="translate(236.24 489.72) scale(1.13 1)">22</text>
<text transform="translate(291.88 461.81) scale(1.13 1)">23</text>
<text transform="translate(347.52 405.99) scale(1.13 1)">24</text>
<text transform="translate(347.52 405.99) scale(1.13 1)">34</text>
<text transform="translate(375.34 405.99) scale(1.13 1)">12</text>
<text transform="translate(347.52 433.90) scale(1.13 1)">33</text>
<text transform="translate(347.52 461.81) scale(1.13 1)">32</text>
<text transform="translate(375.34 461.81) scale(1.13 1)">13</text>
<text transform="translate(403.16 489.72) scale(1.13 1)">14</text>
<text transform="translate(403.16 489.72) scale(1.13 1)">31</text>
<text transform="translate(458.80 461.81) scale(1.13 1)">30</text>
</g></svg></div><div class="a" style="left:1351px;top:90px;width:15px;height:678px;background:#f1f1f1"></div><div class="a" style="left:1351px;top:90px;width:1px;height:678px;background:#e8e8e8"></div><svg class="a" style="left:1354px;top:94px" width="9" height="6" viewBox="0 0 9 6" ><path d="M0.5 5.5H8.5L4.5 0.5Z" fill="#505050"/></svg><div class="a" style="left:1353px;top:185px;width:11px;height:367px;background:#c1c1c1"></div><svg class="a" style="left:1354px;top:758px" width="9" height="6" viewBox="0 0 9 6" ><path d="M0.5 0.5H8.5L4.5 5.5Z" fill="#505050"/></svg>
<div id="bar" class="a"><div class="a" style="left:17px;top:1px;width:16px;height:17px;background:#0000ff"></div><div class="a t" style="left:5px;top:5.04px;font-family:'Liberation Mono',monospace;font-size:10px;line-height:1;color:#aaa;">2</div><div class="a t" style="left:22px;top:5.04px;font-family:'Liberation Mono',monospace;font-size:10px;line-height:1;color:#fff;">3</div><div class="a t" style="left:39px;top:5.04px;font-family:'Liberation Mono',monospace;font-size:10px;line-height:1;color:#aaa;">4</div><div class="a t" style="left:56px;top:5.04px;font-family:'Liberation Mono',monospace;font-size:10px;line-height:1;color:#aaa;">10</div><div class="a t" style="left:357px;top:5.04px;font-family:'Liberation Mono',monospace;font-size:10px;line-height:1;color:#e8968c;">localhost/svg2mpost/www/ — Chromium</div><div class="a t" style="left:577px;top:5.04px;font-family:'Liberation Mono',monospace;font-size:10px;line-height:1;color:#8db5e6;">Clear 3..5 °C</div><div class="a t" style="left:664px;top:5.04px;font-family:'Liberation Mono',monospace;font-size:10px;line-height:1;color:#c8c8c8;">♪ 24%</div><div class="a t" style="left:703.5px;top:5.04px;font-family:'Liberation Mono',monospace;font-size:10px;line-height:1;color:#0a1aff;">MEM 1.0G</div><div class="a t" style="left:762px;top:5.04px;font-family:'Liberation Mono',monospace;font-size:10px;line-height:1;color:#0a0acc;">SWAP 1.3G</div><div class="a t" style="left:826px;top:5.04px;font-family:'Liberation Mono',monospace;font-size:10px;line-height:1;color:#f0e020;">/ 5,4G</div><div class="a t" style="left:872px;top:5.04px;font-family:'Liberation Mono',monospace;font-size:10px;line-height:1;color:#f0e020;">home 10G</div><div class="a t" style="left:930px;top:5.04px;font-family:'Liberation Mono',monospace;font-size:10px;line-height:1;color:#f0e020;">sdcard 42G</div><div class="a t" style="left:1000px;top:5.04px;font-family:'Liberation Mono',monospace;font-size:10px;line-height:1;color:#20e020;">192.168.1.7</div><div class="a t" style="left:1076px;top:5.04px;font-family:'Liberation Mono',monospace;font-size:10px;line-height:1;color:#f0e020;">67%</div><div class="a t" style="left:1112px;top:5.04px;font-family:'Liberation Mono',monospace;font-size:10px;line-height:1;color:#e0e0e0;">45% CHR (00:41)</div><div class="a t" style="left:1212.5px;top:5.04px;font-family:'Liberation Mono',monospace;font-size:10px;line-height:1;color:#f0f0f0;">2019-03-26 23:58:43</div><div class="a" style="left:571.5px;top:4px;width:1px;height:12px;background:#888"></div><div class="a" style="left:659.5px;top:4px;width:1px;height:12px;background:#888"></div><div class="a" style="left:699.5px;top:4px;width:1px;height:12px;background:#888"></div><div class="a" style="left:822px;top:4px;width:1px;height:12px;background:#888"></div><div class="a" style="left:868px;top:4px;width:1px;height:12px;background:#888"></div><div class="a" style="left:925px;top:4px;width:1px;height:12px;background:#888"></div><div class="a" style="left:995px;top:4px;width:1px;height:12px;background:#888"></div><div class="a" style="left:1207.5px;top:4px;width:1px;height:12px;background:#888"></div><svg class="a" style="left:1100px;top:3px" width="9" height="14" viewBox="0 0 9 14" ><path d="M5 0L1 8H4L3 14L8 5H5Z" fill="#eee"/></svg><svg class="a" style="left:1331px;top:2px" width="16" height="16" viewBox="0 0 16 16" ><circle cx="8" cy="8" r="7.5" fill="#1da1f2"/><text x="8" y="12.5" font-family="Liberation Sans" font-weight="bold" font-size="12" fill="#fff" text-anchor="middle">S</text></svg><svg class="a" style="left:1349px;top:1px" width="17" height="18" viewBox="0 0 17 18" ><ellipse cx="8.5" cy="9" rx="7.5" ry="8.5" fill="#3b6fc8"/><path d="M5 6L12 12L8.5 15V3L12 6L5 12" stroke="#fff" stroke-width="1.3" fill="none"/></svg></div>
</body></html>
